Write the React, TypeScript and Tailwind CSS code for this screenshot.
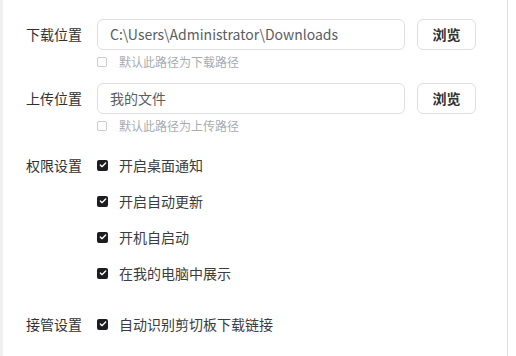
import { Check } from 'lucide-react';

const font = { fontFamily: '"Noto Sans CJK SC", "Liberation Sans", sans-serif' };

const Checked = () => (
  <span className="flex h-[11px] w-[11px] shrink-0 items-center justify-center rounded-[2px] bg-[#1d1d1f]">
    <Check className="h-[8px] w-[8px] text-white" strokeWidth={4} />
  </span>
);

const Unchecked = () => (
  <span className="h-[10px] w-[10px] shrink-0 rounded-[2px] border border-[#c8cbd0] bg-white" />
);

const PathRow = ({ label, value, hint }: { label: string; value: string; hint: string }) => (
  <div className="flex flex-col">
    <div className="flex h-[31px] items-center">
      <span className="w-[71px] shrink-0 text-[14px] text-[#303133]">{label}</span>
      <div className="flex h-[31px] w-[308px] items-center rounded-[6px] border border-[#dcdfe6] px-[12px] text-[14px] text-[#5a5d63]">
        {value}
      </div>
      <button className="ml-[12px] flex h-[31px] w-[59px] items-center justify-center rounded-[6px] border border-[#dcdfe6] bg-white text-[14px] font-bold text-[#303133]">
        浏览
      </button>
    </div>
    <div className="ml-[71px] mt-[5px] flex h-[14px] items-center gap-[12px]">
      <Unchecked />
      <span className="text-[12px] text-[#a8abb2]">{hint}</span>
    </div>
  </div>
);

const CheckItem = ({ text }: { text: string }) => (
  <div className="flex h-[20px] items-center gap-[11px]">
    <Checked />
    <span className="text-[14px] text-[#3a3c40]">{text}</span>
  </div>
);

export default function App() {
  return (
    <div className="flex h-[356px] w-[516px] bg-white" style={font}>
      <div className="h-full w-[3px] bg-[#eef0f2]" />
      <div className="flex h-full w-[505px] flex-col border-r border-[#dcdfe6] pl-[23px] pt-[19px]">
        <PathRow label="下载位置" value="C:\Users\Administrator\Downloads" hint="默认此路径为下载路径" />
        <div className="mt-[14px]">
          <PathRow label="上传位置" value="我的文件" hint="默认此路径为上传路径" />
        </div>
        <div className="mt-[22px] flex">
          <span className="flex h-[20px] w-[71px] shrink-0 items-center text-[14px] text-[#303133]">权限设置</span>
          <div className="flex flex-col gap-[16px]">
            <CheckItem text="开启桌面通知" />
            <CheckItem text="开启自动更新" />
            <CheckItem text="开机自启动" />
            <CheckItem text="在我的电脑中展示" />
          </div>
        </div>
        <div className="mt-[31px] flex">
          <span className="flex h-[20px] w-[71px] shrink-0 items-center text-[14px] text-[#303133]">接管设置</span>
          <CheckItem text="自动识别剪切板下载链接" />
        </div>
      </div>
    </div>
  );
}
